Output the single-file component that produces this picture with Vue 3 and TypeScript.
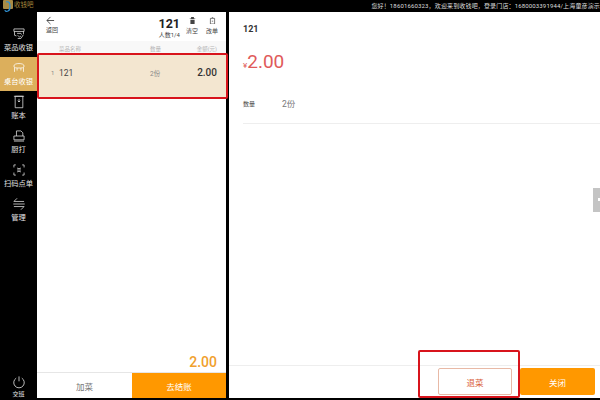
<script setup lang="ts">
interface NavItem {
  label: string
  icon: string
  active?: boolean
}

const navItems: NavItem[] = [
  { label: '菜品收银', icon: 'M3 3h16v4H3zM4 7v6l3 1M18 7v4M8 10h6l1 2M9 13l3 3 2-2M9 18h5l4-6' },
  { label: '桌台收银', icon: 'M3 8c0-3 4-4 8-4s8 1 8 4-4 3-8 3-8 0-8-3zM4 10v7M18 10v7M8 11v4M14 11v4', active: true },
  { label: '账本', icon: 'M5 2h12v18H5zM3 2h16M11 6v5M9 9l2 2 2-2' },
  { label: '厨打', icon: 'M7 11V3h7l3 3v5M3 11h16v6H3zM3 19h16' },
  { label: '扫码点单', icon: 'M3 7V3h3M16 3h3v4M3 15v4h3M16 19h3v-4M8 8l3 1 3-1M8 11h6M8 14l3-1 3 1' },
  { label: '管理', icon: 'M8 2L3 7h16M2 11h18M14 20l5-5H3' },
]
</script>

<template>
  <div class="screen">
    <header class="topbar">
      <div class="logo">
        <span class="logo__mark">
          <svg viewBox="0 0 10 12" fill="none" stroke="#2f8fd0" stroke-width="1.2">
            <path d="M3 2c3-1 4 1 4 4s0 4-2 5-3 0-3-1" />
          </svg>
        </span>
        <span class="logo__name">收钱吧</span>
      </div>
      <div class="topbar__info">您好！18601660323，欢迎来到收钱吧，登录门店：1680003391944/上海童彦演示</div>
    </header>

    <div class="body">
      <nav class="nav">
        <div
          v-for="item in navItems"
          :key="item.label"
          :class="['nav__item', { 'nav__item--active': item.active }]"
        >
          <svg class="nav__icon" viewBox="0 0 22 22" fill="none" stroke="currentColor" stroke-width="1.2">
            <path :d="item.icon" />
          </svg>
          <span>{{ item.label }}</span>
        </div>
        <div class="nav__logout">
          <svg class="nav__power" viewBox="0 0 20 20" fill="none" stroke="currentColor" stroke-width="1.1">
            <path d="M6 4.5a7.5 7.5 0 1 0 8 0M10 2v7" />
          </svg>
          <span>交班</span>
        </div>
      </nav>

      <section class="order">
        <div class="order__head">
          <div class="order__back">
            <svg class="order__arrow" viewBox="0 0 10 10" fill="none" stroke="currentColor" stroke-width="1">
              <path d="M5 1L1 5l4 4M1 5h8" />
            </svg>
            <span>返回</span>
          </div>
          <div class="order__title">
            <strong>121</strong>
            <span>人数1/4</span>
          </div>
          <div class="order__action">
            <svg viewBox="0 0 10 10" fill="currentColor"><path d="M3 0h4v2h2v1H1V2h2zM2 4h6v6H2z" /></svg>
            <span>清空</span>
          </div>
          <div class="order__action">
            <svg viewBox="0 0 10 10" fill="none" stroke="currentColor" stroke-width="1"><path d="M2 2h6v8H2zM4 0.5h2M4 6h2" /></svg>
            <span>改单</span>
          </div>
        </div>

        <div class="cols">
          <span class="cols__name">菜品名称</span>
          <span class="cols__qty">数量</span>
          <span class="cols__amount">金额(元)</span>
        </div>
        <div class="line">
          <span class="line__index">1</span>
          <span class="line__name">121</span>
          <span class="line__qty">2份</span>
          <span class="line__amount">2.00</span>
        </div>

        <div class="order__total">2.00</div>
        <div class="order__foot">
          <div class="order__add">加菜</div>
          <div class="order__pay">去结账</div>
        </div>
      </section>

      <section class="detail">
        <div class="detail__name">121</div>
        <div class="detail__price"><small>¥</small>2.00</div>
        <div class="detail__qty">
          <span class="detail__label">数量</span>
          <span class="detail__value">2份</span>
        </div>
        <div class="detail__foot">
          <button type="button" class="btn btn--outline">退菜</button>
          <button type="button" class="btn btn--solid">关闭</button>
        </div>
        <div class="detail__tab"></div>
      </section>
    </div>

    <div class="mark mark--row"></div>
    <div class="mark mark--btn"></div>
  </div>
</template>

<style>
body {
  background: #000;
}
</style>

<style scoped>
.screen,
.screen * {
  box-sizing: border-box;
}

.screen {
  position: relative;
  width: 600px;
  height: 400px;
  overflow: hidden;
  display: flex;
  flex-direction: column;
  background: #000;
  font-family: "Roboto", "Noto Sans CJK SC", sans-serif;
  color: #333;
}

.topbar {
  height: 12px;
  flex: none;
  display: flex;
  align-items: flex-start;
  justify-content: space-between;
  color: #ddd;
}
.logo {
  display: flex;
  align-items: flex-start;
  gap: 1px;
  padding-left: 3px;
}
.logo__mark {
  width: 10px;
  height: 9px;
  background: #a98c45;
  border-radius: 1px;
}
.logo__mark svg {
  display: block;
  width: 10px;
  height: 12px;
}
.logo__name {
  font-size: 6.5px;
  line-height: 10px;
  color: #a88a3e;
}
.topbar__info {
  flex: none;
  white-space: nowrap;
  font-size: 6px;
  letter-spacing: 0.15px;
  line-height: 12px;
}

.body {
  flex: 1;
  display: flex;
  min-height: 0;
  padding-bottom: 2px;
}

.nav {
  width: 37px;
  flex: none;
  display: flex;
  flex-direction: column;
  align-items: stretch;
  padding-top: 11px;
  color: #e4e4e4;
  font-size: 7.25px;
}
.nav__item {
  height: 34px;
  display: flex;
  flex-direction: column;
  align-items: center;
  justify-content: center;
  white-space: nowrap;
  line-height: 11px;
}
.nav__item--active {
  background: #dcaf5c;
  color: #fff;
}
.nav__icon {
  width: 14px;
  height: 14px;
  margin-bottom: 1px;
}
.nav__logout {
  margin-top: auto;
  display: flex;
  flex-direction: column;
  align-items: center;
  font-size: 6px;
  line-height: 8px;
  color: #eee;
}
.nav__power {
  width: 14px;
  height: 14px;
  margin-bottom: 1px;
}

.order {
  width: 189px;
  flex: none;
  display: flex;
  flex-direction: column;
  background: #fff;
}
.order__head {
  height: 29px;
  flex: none;
  display: flex;
  align-items: flex-start;
  padding: 4px 4px 0 9px;
  font-size: 6px;
  color: #444;
}
.order__back {
  display: flex;
  flex-direction: column;
  align-items: flex-start;
  line-height: 8px;
}
.order__arrow {
  width: 9px;
  height: 9px;
  margin-bottom: 1px;
}
.order__title {
  margin-left: auto;
  display: flex;
  flex-direction: column;
  align-items: center;
  line-height: 8px;
}
.order__title strong {
  font-size: 12.5px;
  line-height: 15px;
  color: #222;
}
.order__action {
  width: 20px;
  display: flex;
  flex-direction: column;
  align-items: center;
  line-height: 8px;
  margin-left: 2px;
}
.order__action:last-child {
  margin-left: 0;
}
.order__action svg {
  width: 7px;
  height: 7px;
  margin: 1px 0 3px;
}

.cols {
  height: 13px;
  flex: none;
  display: flex;
  align-items: center;
  padding: 3px 9px 0 22px;
  background: #f8f8f8;
  font-size: 5.5px;
  color: #b5b5b5;
}
.cols__name {
  width: 91px;
}
.cols__qty {
  flex: 1;
}

.line {
  height: 43px;
  flex: none;
  display: flex;
  align-items: center;
  padding: 0 9px 6px 14px;
  background: #f3e6d0;
  color: #444;
}
.line__index {
  width: 8px;
  font-size: 6px;
  color: #888;
}
.line__name {
  width: 91px;
  font-size: 8.5px;
}
.line__qty {
  flex: 1;
  font-size: 6.5px;
  color: #888;
}
.line__amount {
  font-size: 10px;
  font-weight: 500;
  color: #333;
}

.order__total {
  margin-top: auto;
  padding-right: 9px;
  text-align: right;
  font-size: 14px;
  line-height: 20px;
  font-weight: 500;
  color: #f0a02d;
}
.order__foot {
  height: 26px;
  flex: none;
  display: flex;
  border-top: 1px solid #e6e6e6;
  font-size: 8.5px;
}
.order__add {
  width: 95px;
  display: flex;
  align-items: center;
  justify-content: center;
  color: #777;
}
.order__pay {
  flex: 1;
  display: flex;
  align-items: center;
  justify-content: center;
  background: #ff9800;
  color: #fff;
}

.detail {
  position: relative;
  flex: 1;
  margin-left: 3px;
  display: flex;
  flex-direction: column;
  background: #fff;
}
.detail__name {
  padding: 11px 0 0 14px;
  font-size: 9px;
  line-height: 12px;
  font-weight: 700;
  color: #333;
}
.detail__price {
  padding: 15px 0 0 14px;
  font-size: 19px;
  line-height: 24px;
  color: #e05a5a;
}
.detail__price small {
  font-size: 8px;
}
.detail__qty {
  margin: 19px 0 0 14px;
  padding-bottom: 12px;
  display: flex;
  align-items: center;
  border-bottom: 1px solid #eee;
  line-height: 14px;
}
.detail__label {
  width: 39px;
  font-size: 6px;
  color: #444;
}
.detail__value {
  font-size: 8.5px;
  color: #777;
}
.detail__foot {
  margin-top: auto;
  height: 33px;
  flex: none;
  display: flex;
  justify-content: flex-end;
  align-items: flex-start;
  gap: 8px;
  padding: 2px 5px 0 0;
  border-top: 1px solid #eee;
}
.btn {
  height: 27px;
  padding: 0;
  border-radius: 2px;
  font: inherit;
  font-size: 8.5px;
}
.btn--outline {
  width: 74px;
  background: #fff;
  border: 1px solid #e8b9a6;
  color: #d9603a;
}
.btn--solid {
  width: 75px;
  background: #ff9800;
  border: none;
  color: #fff;
}
.detail__tab {
  position: absolute;
  right: 0;
  top: 176px;
  width: 7px;
  height: 24px;
  background: #c4c4c4;
}
.detail__tab::after {
  content: "";
  position: absolute;
  right: 0;
  top: 10px;
  width: 2px;
  height: 3px;
  background: #fff;
}

.mark {
  position: absolute;
  border: 2px solid #d8141c;
  border-radius: 2px;
  pointer-events: none;
}
.mark--row {
  left: 37px;
  top: 53px;
  width: 191px;
  height: 46px;
}
.mark--btn {
  left: 418px;
  top: 350px;
  width: 102px;
  height: 48px;
}
</style>
